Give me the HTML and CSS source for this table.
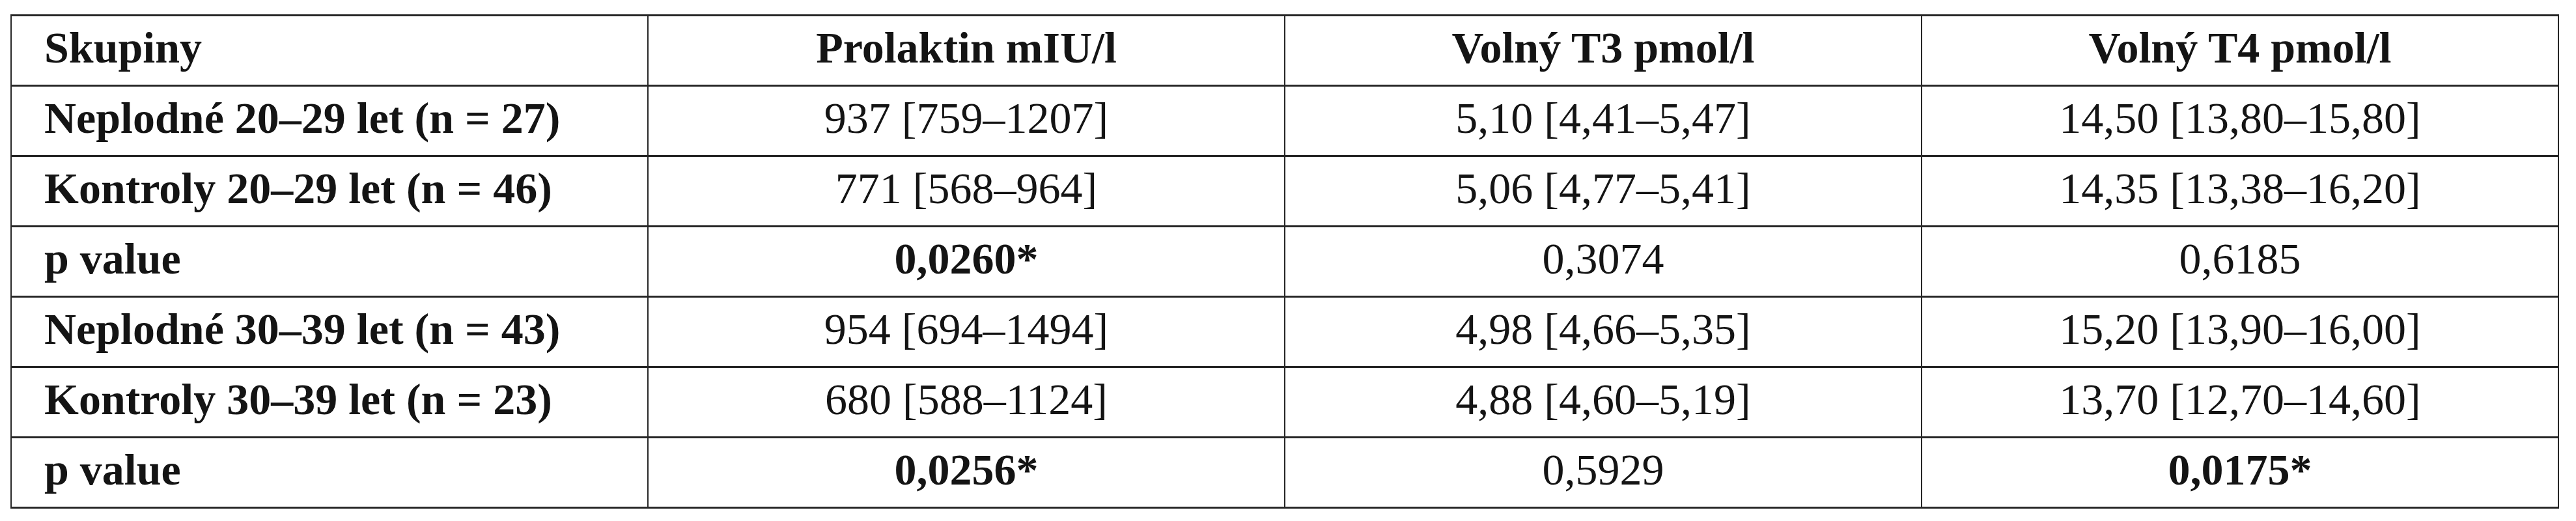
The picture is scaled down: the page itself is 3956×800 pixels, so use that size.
FILE: index.html
```html
<!DOCTYPE html>
<html lang="cs">
<head>
<meta charset="utf-8">
<title>Tabulka</title>
<link rel="stylesheet" href="styles.css">
</head>
<body>
<table class="data">
  <thead>
    <tr>
      <th class="label">Skupiny</th>
      <th>Prolaktin mIU/l</th>
      <th>Volný T3 pmol/l</th>
      <th>Volný T4 pmol/l</th>
    </tr>
  </thead>
  <tbody>
    <tr>
      <th class="label">Neplodné 20–29 let (n = 27)</th>
      <td>937 [759–1207]</td>
      <td>5,10 [4,41–5,47]</td>
      <td>14,50 [13,80–15,80]</td>
    </tr>
    <tr>
      <th class="label">Kontroly 20–29 let (n = 46)</th>
      <td>771 [568–964]</td>
      <td>5,06 [4,77–5,41]</td>
      <td>14,35 [13,38–16,20]</td>
    </tr>
    <tr>
      <th class="label">p value</th>
      <td class="sig">0,0260*</td>
      <td>0,3074</td>
      <td>0,6185</td>
    </tr>
    <tr>
      <th class="label">Neplodné 30–39 let (n = 43)</th>
      <td>954 [694–1494]</td>
      <td>4,98 [4,66–5,35]</td>
      <td>15,20 [13,90–16,00]</td>
    </tr>
    <tr>
      <th class="label">Kontroly 30–39 let (n = 23)</th>
      <td>680 [588–1124]</td>
      <td>4,88 [4,60–5,19]</td>
      <td>13,70 [12,70–14,60]</td>
    </tr>
    <tr>
      <th class="label">p value</th>
      <td class="sig">0,0256*</td>
      <td>0,5929</td>
      <td class="sig">0,0175*</td>
    </tr>
  </tbody>
</table>
</body>
</html>
```

FILE: styles.css
```css
html, body {
  margin: 0;
  padding: 0;
  background: #ffffff;
}

body {
  padding: 22px 0 0 16px;
  font-family: "Liberation Serif", "Times New Roman", serif;
  color: #141414;
}

.data {
  border-collapse: collapse;
  table-layout: fixed;
  width: 3914px;
}

.data th,
.data td {
  height: 108px;
  box-sizing: border-box;
  padding: 8px 20px 0 20px;
  vertical-align: top;
  font-size: 68px;
  line-height: 80px;
  text-align: center;
  font-weight: normal;
  border-top: 3px solid #262626;
  border-bottom: 3px solid #262626;
  border-left: 2px solid #262626;
  border-right: 2px solid #262626;
  white-space: nowrap;
}

.data thead th {
  font-weight: bold;
}

.data th.label {
  text-align: left;
  padding-left: 50px;
  font-weight: bold;
}

.data td.sig {
  font-weight: bold;
}
```
